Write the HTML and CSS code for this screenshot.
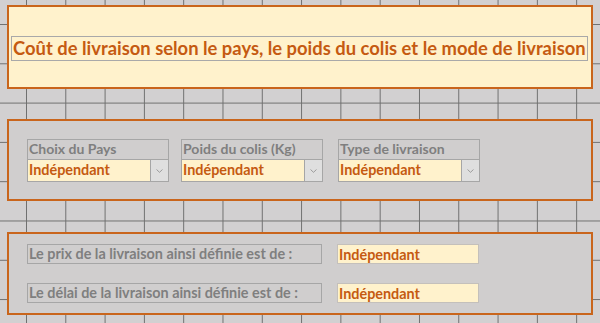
FILE: index.html
```html
<!DOCTYPE html>
<html lang="fr">
<head>
<meta charset="utf-8">
<title>Coût de livraison</title>
<link rel="stylesheet" href="styles.css">
</head>
<body>
<div class="sheet">
  <section class="panel panel-title">
    <div class="title-box">Coût de livraison selon le pays, le poids du colis et le mode de livraison</div>
  </section>

  <section class="panel panel-choices">
    <div class="field field-1">
      <div class="field-label">Choix du Pays</div>
      <div class="combo">
        <span class="combo-value">Indépendant</span>
        <span class="combo-btn"><svg width="7" height="4" viewBox="0 0 7 4"><path d="M0.5 0.5 L3.5 3.3 L6.5 0.5" fill="none" stroke="#8a8a8a" stroke-width="0.8"/></svg></span>
      </div>
    </div>
    <div class="field field-2">
      <div class="field-label">Poids du colis (Kg)</div>
      <div class="combo">
        <span class="combo-value">Indépendant</span>
        <span class="combo-btn"><svg width="7" height="4" viewBox="0 0 7 4"><path d="M0.5 0.5 L3.5 3.3 L6.5 0.5" fill="none" stroke="#8a8a8a" stroke-width="0.8"/></svg></span>
      </div>
    </div>
    <div class="field field-3">
      <div class="field-label">Type de livraison</div>
      <div class="combo">
        <span class="combo-value">Indépendant</span>
        <span class="combo-btn"><svg width="7" height="4" viewBox="0 0 7 4"><path d="M0.5 0.5 L3.5 3.3 L6.5 0.5" fill="none" stroke="#8a8a8a" stroke-width="0.8"/></svg></span>
      </div>
    </div>
  </section>

  <section class="panel panel-results">
    <div class="result-row">
      <div class="result-label">Le prix de la livraison ainsi définie est de :</div>
      <div class="result-value">Indépendant</div>
    </div>
    <div class="result-row">
      <div class="result-label">Le délai de la livraison ainsi définie est de :</div>
      <div class="result-value">Indépendant</div>
    </div>
  </section>
</div>
</body>
</html>
```

FILE: styles.css
```css
html, body {
  margin: 0;
  padding: 0;
}

body {
  width: 600px;
  height: 323px;
  overflow: hidden;
  background-color: #d2d0d1;
  background-image:
    linear-gradient(to right, #6f6f6f 1px, transparent 1px),
    linear-gradient(to bottom, #6f6f6f 1px, transparent 1px);
  background-size: 39.3px 39.3px;
  background-position: 26px 24px;
  font-family: Lato, "Open Sans", sans-serif;
  font-weight: 700;
}

.sheet {
  display: flex;
  flex-direction: column;
  padding: 5px 0 0 7px;
}

.panel {
  box-sizing: border-box;
  width: 586px;
  border: 2px solid #c9651c;
}

.panel-title {
  height: 84px;
  background: #fff2cc;
  padding: 29px 3px 0 2px;
}

.title-box {
  box-sizing: border-box;
  height: 25px;
  border: 1px solid #a9a9a9;
  color: #c55a11;
  font-size: 18.4px;
  line-height: 22px;
  padding-left: 1px;
  white-space: nowrap;
  overflow: hidden;
}

.panel-choices {
  height: 82px;
  margin-top: 30px;
  background: #d0cece;
  display: flex;
  padding: 18px 0 0 18px;
}

.field {
  width: 142px;
  display: flex;
  flex-direction: column;
}

.field-2 { margin-left: 12px; }
.field-3 { margin-left: 15px; }

.field-label {
  box-sizing: border-box;
  height: 20px;
  border: 1px solid #a6a6a6;
  border-bottom: none;
  color: #7f7f7f;
  font-size: 14px;
  line-height: 18px;
  padding-left: 1px;
  white-space: nowrap;
}

.combo {
  box-sizing: border-box;
  height: 23px;
  border: 1px solid #a6a6a6;
  display: flex;
  background: #fff2cc;
}

.combo-value {
  flex: 1;
  color: #c55a11;
  font-size: 14.4px;
  line-height: 19px;
  padding-left: 1px;
  white-space: nowrap;
}

.combo-btn {
  width: 17px;
  border-left: 1px solid #a6a6a6;
  background: #dfdfdf;
  display: flex;
  align-items: center;
  justify-content: center;
}

.panel-results {
  height: 83px;
  margin-top: 31px;
  background: #d0cece;
  display: flex;
  flex-direction: column;
  gap: 19px;
  padding: 10px 0 0 18px;
}

.result-row {
  display: flex;
  height: 20px;
}

.result-label {
  box-sizing: border-box;
  width: 295px;
  border: 1px solid #a6a6a6;
  color: #7f7f7f;
  font-size: 14.4px;
  line-height: 18px;
  padding-left: 1px;
  white-space: nowrap;
}

.result-value {
  box-sizing: border-box;
  width: 142px;
  margin-left: 15px;
  border: 1px solid #c4c0bb;
  background: #fff2cc;
  color: #c55a11;
  font-size: 14.4px;
  line-height: 20px;
  padding-left: 1px;
  white-space: nowrap;
}
```
